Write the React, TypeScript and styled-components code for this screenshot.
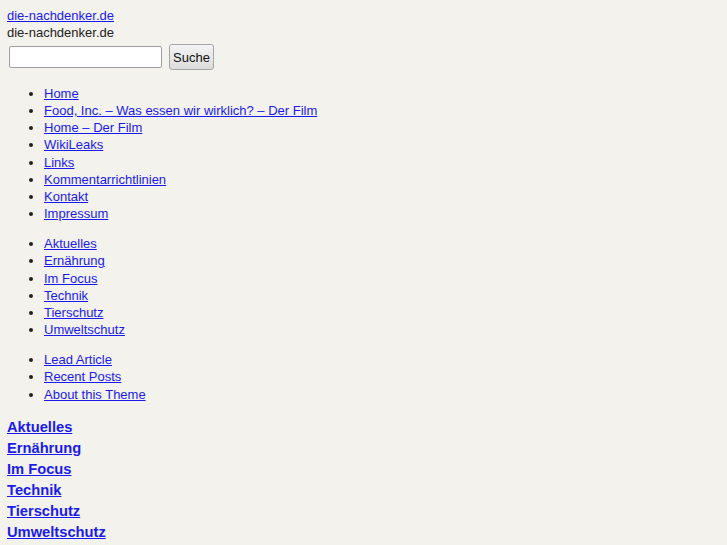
import React from "react";
import styled, { createGlobalStyle } from "styled-components";

const Global = createGlobalStyle`
  html, body { background: #f3f2ec; }
  body {
    margin: 7px 8px 8px 7px;
    font-family: "Liberation Sans", Arial, sans-serif;
    font-size: 13px;
    line-height: 17px;
    color: #222;
  }
  a { color: #1a1aee; }
`;

const SiteLink = styled.a`
  display: block;
`;

const Tagline = styled.div``;

const SearchForm = styled.form`
  display: flex;
  align-items: center;
  gap: 7px;
  padding: 3px 0 2px 2px;
`;

const SearchInput = styled.input`
  width: 147px;
  height: 16px;
  padding: 2px 2px;
  border: 1px solid #a0a0a0;
  border-radius: 2px;
  background: #fff;
  font: inherit;
`;

const SearchButton = styled.button`
  height: 26px;
  padding: 0 3px;
  border: 1px solid #a6a6a6;
  border-radius: 3px;
  background: linear-gradient(#f4f4f4, #dcdcdc);
  font-family: "Liberation Sans", Arial, sans-serif;
  font-size: 13px;
  color: #111;
`;

const List = styled.ul`
  margin: 13px 0;
  padding-left: 37px;
  list-style: disc;
  li { line-height: 17.15px; }
`;

const Heading = styled.a`
  display: block;
  font-size: 14.7px;
  font-weight: bold;
  line-height: 21px;
`;

const HeadingBlock = styled.div`
  margin-top: 14px;
`;

const pages = [
  "Home",
  "Food, Inc. – Was essen wir wirklich? – Der Film",
  "Home – Der Film",
  "WikiLeaks",
  "Links",
  "Kommentarrichtlinien",
  "Kontakt",
  "Impressum",
];
const cats = ["Aktuelles", "Ernährung", "Im Focus", "Technik", "Tierschutz", "Umweltschutz"];
const misc = ["Lead Article", "Recent Posts", "About this Theme"];

export default function App() {
  return (
    <>
      <Global />
      <SiteLink href="#">die-nachdenker.de</SiteLink>
      <Tagline>die-nachdenker.de</Tagline>
      <SearchForm onSubmit={(e) => e.preventDefault()}>
        <SearchInput type="text" />
        <SearchButton type="submit">Suche</SearchButton>
      </SearchForm>
      <List>
        {pages.map((p) => (
          <li key={p}><a href="#">{p}</a></li>
        ))}
      </List>
      <List>
        {cats.map((p) => (
          <li key={p}><a href="#">{p}</a></li>
        ))}
      </List>
      <List>
        {misc.map((p) => (
          <li key={p}><a href="#">{p}</a></li>
        ))}
      </List>
      <HeadingBlock>
        {cats.map((p) => (
          <Heading key={p} href="#">{p}</Heading>
        ))}
      </HeadingBlock>
    </>
  );
}
